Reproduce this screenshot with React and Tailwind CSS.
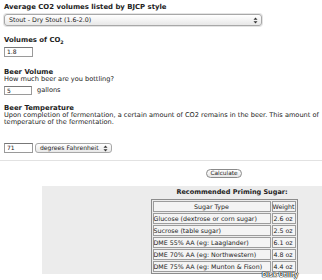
import React from "react";

function Arrows() {
  return (
    <svg width="5" height="7" viewBox="0 0 5 7" className="block">
      <path d="M2.5 0.5 L4.5 2.8 L0.5 2.8 Z" fill="#333" />
      <path d="M2.5 6.5 L4.5 4.2 L0.5 4.2 Z" fill="#333" />
    </svg>
  );
}

const rows = [
  ["Glucose (dextrose or corn sugar)", "2.6 oz"],
  ["Sucrose (table sugar)", "2.5 oz"],
  ["DME 55% AA (eg: Laaglander)", "6.1 oz"],
  ["DME 70% AA (eg: Northwestern)", "4.8 oz"],
  ["DME 75% AA (eg: Munton & Fison)", "4.4 oz"],
];

export default function App() {
  return (
    <div className="relative w-[322px] h-[280px] overflow-hidden bg-white text-[#222] font-['DejaVu_Sans',sans-serif]">
      <div className="w-[448px] pt-[3px]">
        <div className="pl-1 text-[6.6px]">
          <div className="font-bold text-[6.9px] leading-[9px] h-[9px]">
            Average CO2 volumes listed by BJCP style
          </div>
          <div className="mt-[2px] h-[12px] w-[258px] rounded-[3px] border border-[#a8a8a8] bg-gradient-to-b from-white to-[#e8e8e8] flex items-center justify-between pl-[4px] pr-[3px] shadow-[0_0_0_1px_#e4e4e4]">
            <span className="text-[6.3px] leading-none">Stout - Dry Stout (1.6-2.0)</span>
            <Arrows />
          </div>
          <div className="mt-[10px] font-bold text-[6.9px] leading-[9px] h-[9px]">
            Volumes of CO<sub className="text-[4.8px] align-[-1px]">2</sub>
          </div>
          <div className="mt-[2px] h-[10px] w-[29px] border border-[#9a9a9a] border-t-[#777] flex items-center pl-[2px] text-[6px] leading-none">
            1.8
          </div>
          <div className="mt-[12px] font-bold text-[6.9px] leading-[7px] h-[7px]">Beer Volume</div>
          <div className="leading-[7px] h-[7px]">How much beer are you bottling?</div>
          <div className="mt-[3px] flex items-center h-[9px]">
            <div className="h-[9px] w-[28px] border border-[#9a9a9a] border-t-[#777] flex items-center pl-[2px] text-[6px] leading-none">
              5
            </div>
            <span className="ml-[5px]">gallons</span>
          </div>
          <div className="mt-[10px] font-bold text-[6.9px] leading-[7px] h-[7px]">Beer Temperature</div>
          <div className="leading-[7px] w-[318px] whitespace-nowrap">
            Upon completion of fermentation, a certain amount of CO2 remains in the beer. This amount of
            <br />
            temperature of the fermentation.
          </div>
          <div className="mt-[17px] flex items-center h-[10px]">
            <div className="h-[10px] w-[29px] border border-[#9a9a9a] border-t-[#777] flex items-center pl-[2px] text-[6px] leading-none">
              71
            </div>
            <div className="ml-[2px] h-[10px] w-[77px] rounded-[3px] border border-[#a8a8a8] bg-gradient-to-b from-white to-[#e8e8e8] flex items-center justify-between pl-[4px] pr-[3px]">
              <span className="text-[6.1px] leading-none">degrees Fahrenheit</span>
              <Arrows />
            </div>
          </div>
        </div>
        <div className="mt-[7px] h-px bg-[#e2e2e2]" />
        <div className="mt-[8px] flex justify-center">
          <div className="h-[9px] px-[3px] rounded-full border border-[#8a8a8a] bg-gradient-to-b from-white to-[#e6e6e6] flex items-center text-[5.8px] leading-none">
            Calculate
          </div>
        </div>
        <div className="mt-[8px] mx-[42px] h-[88px] bg-[#ececec] flex flex-col items-center pt-[2px]">
          <div className="font-bold text-[6.5px] leading-[9px] h-[9px] pl-[16px]">Recommended Priming Sugar:</div>
          <table className="mt-[2px] w-[147px] border border-[#8c8c8c] border-separate border-spacing-[1px] text-[6.3px] leading-[9px] bg-[#ececec]">
            <tbody>
              <tr>
                <td className="border border-[#9c9c9c] bg-[#f4f4f4] text-center w-[118px] h-[10px] p-0">Sugar Type</td>
                <td className="border border-[#9c9c9c] bg-[#f4f4f4] text-center p-0">Weight</td>
              </tr>
              {rows.map(([a, b]) => (
                <tr key={a}>
                  <td className="border border-[#9c9c9c] bg-[#f4f4f4] h-[11px] px-0 py-0 whitespace-nowrap">{a}</td>
                  <td className="border border-[#9c9c9c] bg-[#f4f4f4] px-[1px] py-0 whitespace-nowrap">{b}</td>
                </tr>
              ))}
            </tbody>
          </table>
        </div>
      </div>
      <div className="absolute left-[262px] top-[271px] text-[7px] font-bold leading-[8px] text-white [text-shadow:0_0_1px_#000,0_0_1px_#000,0_0_1px_#000] font-['Liberation_Sans',sans-serif]">
        Disk Utility
      </div>
    </div>
  );
}
